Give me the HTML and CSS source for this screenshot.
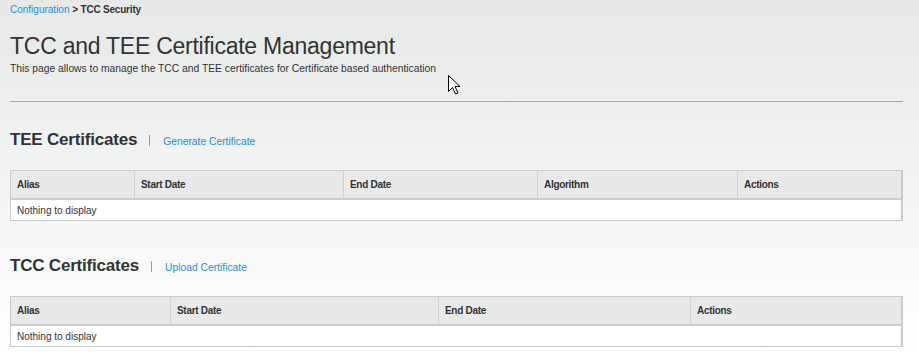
FILE: index.html
```html
<!DOCTYPE html>
<html lang="en">
<head>
    <meta charset="UTF-8">
    <meta name="viewport" content="width=device-width, initial-scale=1.0">
    <title>TCC Security</title>
    <link rel="stylesheet" href="styles.css">
</head>
<body>

    <div class="page">
        <!-- Breadcrumb -->
        <div class="breadcrumb"><a href="#">Configuration</a> <b>&gt; TCC Security</b></div>

        <h1>TCC and TEE Certificate Management</h1>
        <p class="intro">This page allows to manage the TCC and TEE certificates for Certificate based authentication</p>

        <hr class="divider">

        <!-- TEE certificates -->
        <div class="section-head">
            <h2>TEE Certificates</h2>
            <span class="sep"></span>
            <a href="#">Generate Certificate</a>
        </div>
        <table class="grid tee">
            <thead>
                <tr>
                    <th class="c1">Alias</th>
                    <th class="c2">Start Date</th>
                    <th class="c3">End Date</th>
                    <th class="c4">Algorithm</th>
                    <th class="c5">Actions</th>
                </tr>
            </thead>
            <tbody>
                <tr><td colspan="5">Nothing to display</td></tr>
            </tbody>
        </table>

        <!-- TCC certificates -->
        <div class="section-head">
            <h2>TCC Certificates</h2>
            <span class="sep"></span>
            <a href="#">Upload Certificate</a>
        </div>
        <table class="grid tcc">
            <thead>
                <tr>
                    <th class="c1">Alias</th>
                    <th class="c2">Start Date</th>
                    <th class="c3">End Date</th>
                    <th class="c4">Actions</th>
                </tr>
            </thead>
            <tbody>
                <tr><td colspan="4">Nothing to display</td></tr>
            </tbody>
        </table>
    </div>

    <!-- mouse pointer from the screenshot -->
    <svg class="cursor" width="13" height="20" viewBox="0 0 13 20">
        <path d="M0.5 0.5 L0.5 16.5 L4.5 12.5 L7.5 19 L10 18 L7 11.5 L12 11.5 Z" fill="#fff" stroke="#000" stroke-width="1"/>
    </svg>

</body>
</html>
```

FILE: styles.css
```css
html {
    background: linear-gradient(to bottom, #e6e9e8 0%, #f3f4f4 50%, #ffffff 100%);
    min-height: 100%;
}
body {
    font-family: "Liberation Sans", Arial, sans-serif;
    color: #333;
    margin: 0;
    min-height: 359px;
    position: relative;
}
a {
    color: #1e8fd8;
    text-decoration: none;
}
.page {
    width: 893px;
    padding: 3px 16px 0 10px;
}
.breadcrumb {
    font-size: 10px;
    line-height: 14px;
}
.breadcrumb b {
    color: #333;
    letter-spacing: -0.2px;
}
h1 {
    font-size: 23px;
    font-weight: normal;
    line-height: 28px;
    letter-spacing: -0.25px;
    margin: 15px 0 0;
}
.intro {
    font-size: 10.3px;
    line-height: 14px;
    margin: 2px 0 0;
}
.divider {
    border: none;
    border-top: 1px solid #a8aaaa;
    margin: 25px 0 0;
    height: 0;
}
.section-head {
    display: flex;
    align-items: center;
    margin-top: 28px;
    height: 20px;
}
.grid + .section-head {
    margin-top: 35px;
}
h2 {
    font-size: 17px;
    line-height: 20px;
    letter-spacing: -0.2px;
    margin: 0;
}
.sep {
    width: 1px;
    height: 11px;
    background: #999;
    margin: 1px 13px 0 12px;
}
.section-head a {
    font-size: 10.3px;
    margin-top: 3px;
}
.grid {
    width: 893px;
    table-layout: fixed;
    border-collapse: separate;
    border-spacing: 0;
    border: 1px solid #cacaca;
    border-right-width: 2px;
    margin-top: 20px;
    background: #fff;
    font-size: 10px;
}
.grid th {
    box-sizing: border-box;
    height: 29px;
    padding: 0 6px;
    text-align: left;
    font-weight: bold;
    letter-spacing: -0.3px;
    background: #e9e9e9;
    border-left: 1px solid #d2d2d2;
    border-bottom: 2px solid #cdcdcd;
}
.grid th:first-child {
    border-left: none;
}
.grid td {
    height: 20px;
    padding: 0 6px;
}
.tee .c1 { width: 123px; }
.tee .c2 { width: 209px; }
.tee .c3 { width: 194px; }
.tee .c4 { width: 200px; }
.tee .c5 { width: 164px; }
.tcc .c1 { width: 159px; }
.tcc .c2 { width: 268px; }
.tcc .c3 { width: 252px; }
.tcc .c4 { width: 211px; }
.cursor {
    position: absolute;
    left: 448px;
    top: 75px;
}
```
